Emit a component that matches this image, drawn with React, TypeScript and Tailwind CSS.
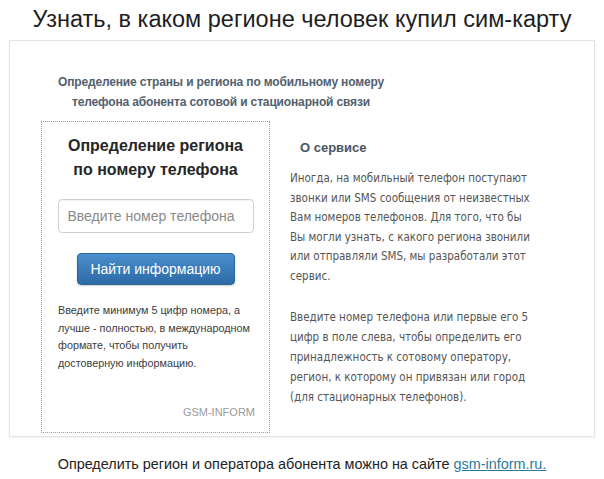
export default function App() {
  return (
    <div className="h-[479px] w-[604px] overflow-hidden bg-white font-['Liberation_Sans',Arial,sans-serif]">
      <h1 className="pt-[6px] text-center text-[23.5px] leading-[27px] text-[#1e1e1e]">
        Узнать, в каком регионе человек купил сим-карту
      </h1>

      <div className="mx-[9px] mt-[7px] h-[397px] border border-[#e3e3e3] shadow-[0_1px_2px_rgba(0,0,0,0.06)]">
        <div className="w-[422px] pt-[31px] text-center text-[12px] font-bold leading-[20px] tracking-[-0.15px] text-[#52606e]">
          Определение страны и региона по мобильному номеру
          <br />
          телефона абонента сотовой и стационарной связи
        </div>

        <div className="mt-[9px] flex">
          <div className="ml-[31px] flex h-[312px] w-[229px] flex-col border border-dotted border-[#9a9a9a]">
            <div className="pt-[12px] text-center text-[16px] font-bold leading-[24px] text-[#262626]">
              Определение региона
              <br />
              по номеру телефона
            </div>
            <input
              type="text"
              placeholder="Введите номер телефона"
              className="mx-auto mt-[17px] h-[34px] w-[196px] rounded-[4px] border border-[#cfcfcf] px-[9px] text-[14px] text-[#333] placeholder:text-[#8a8a8a] shadow-[inset_0_1px_1px_rgba(0,0,0,0.05)]"
            />
            <button
              type="button"
              className="mx-auto mt-[20px] h-[32px] w-[158px] rounded-[4px] border border-[#2b669a] bg-gradient-to-b from-[#4a8fce] to-[#2c6aa6] text-[14px] text-white shadow-[0_1px_2px_rgba(0,0,0,0.2)]"
            >
              Найти информацию
            </button>
            <p className="mt-[17px] pl-[16px] pr-[6px] text-[10.8px] leading-[17.5px] text-[#3c3c3c]">
              Введите минимум 5 цифр номера, а
              <br />
              лучше - полностью, в международном
              <br />
              формате, чтобы получить
              <br />
              достоверную информацию.
            </p>
            <div className="mt-auto pb-[12px] pr-[14px] text-right text-[11px] text-[#9a9a9a]">GSM-INFORM</div>
          </div>

          <div className="ml-[20px] w-[250px] pt-[18px] font-['DejaVu_Sans_Condensed','DejaVu_Sans',Tahoma,sans-serif] text-[11.5px] text-[#555]">
            <div className="pl-[10px] font-['Liberation_Sans',Arial,sans-serif] text-[13px] font-bold leading-[18px] text-[#4a5562]">
              О сервисе
            </div>
            <p className="mt-[12px] leading-[19.5px]">
              Иногда, на мобильный телефон поступают
              <br />
              звонки или SMS сообщения от неизвестных
              <br />
              Вам номеров телефонов. Для того, что бы
              <br />
              Вы могли узнать, с какого региона звонили
              <br />
              или отправляли SMS, мы разработали этот
              <br />
              сервис.
            </p>
            <p className="mt-[21px] leading-[20px]">
              Введите номер телефона или первые его 5
              <br />
              цифр в поле слева, чтобы определить его
              <br />
              принадлежность к сотовому оператору,
              <br />
              регион, к которому он привязан или город
              <br />
              (для стационарных телефонов).
            </p>
          </div>
        </div>
      </div>

      <p className="mt-[17px] text-center text-[14.4px] text-[#222]">
        Определить регион и оператора абонента можно на сайте{' '}
        <a href="#" className="text-[#2b7a9e] underline">
          gsm-inform.ru.
        </a>
      </p>
    </div>
  );
}
